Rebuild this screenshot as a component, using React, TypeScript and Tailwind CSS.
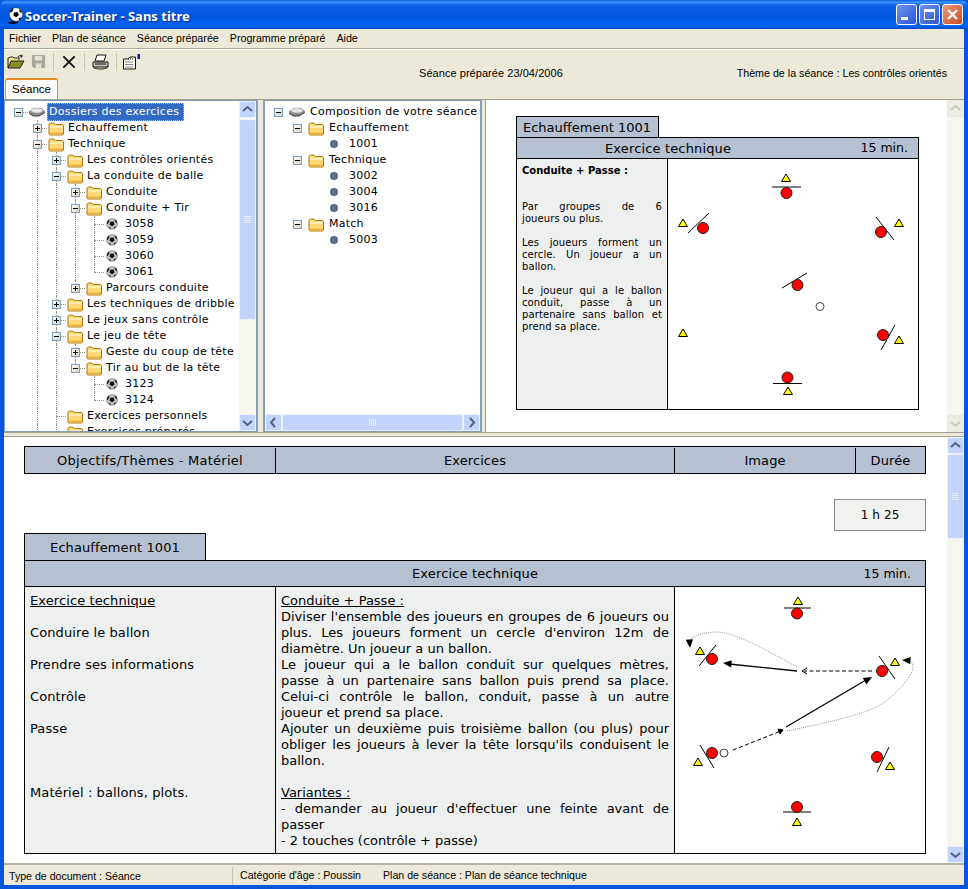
import React from "react";

const tahoma = "font-['Liberation_Sans',sans-serif]";
const verdana = "font-['DejaVu_Sans',sans-serif]";

type Exp = "plus" | "minus" | "none";
type Icon = "disk" | "folder" | "ball" | "dot";

interface TreeRow {
  label: string;
  guides: number[]; // columns holding a vertical dotted line
  level: number;
  exp: Exp;
  icon: Icon;
  last?: boolean;
  selected?: boolean;
}

const leftTree: TreeRow[] = [
  { label: "Dossiers des exercices", guides: [], level: 0, exp: "minus", icon: "disk", selected: true },
  { label: "Echauffement", guides: [], level: 1, exp: "plus", icon: "folder" },
  { label: "Technique", guides: [], level: 1, exp: "minus", icon: "folder" },
  { label: "Les contrôles orientés", guides: [1], level: 2, exp: "plus", icon: "folder" },
  { label: "La conduite de balle", guides: [1], level: 2, exp: "minus", icon: "folder" },
  { label: "Conduite", guides: [1, 2], level: 3, exp: "plus", icon: "folder" },
  { label: "Conduite + Tir", guides: [1, 2], level: 3, exp: "minus", icon: "folder" },
  { label: "3058", guides: [1, 2, 3], level: 4, exp: "none", icon: "ball" },
  { label: "3059", guides: [1, 2, 3], level: 4, exp: "none", icon: "ball" },
  { label: "3060", guides: [1, 2, 3], level: 4, exp: "none", icon: "ball" },
  { label: "3061", guides: [1, 2, 3], level: 4, exp: "none", icon: "ball", last: true },
  { label: "Parcours conduite", guides: [1, 2], level: 3, exp: "plus", icon: "folder", last: true },
  { label: "Les techniques de dribble", guides: [1], level: 2, exp: "plus", icon: "folder" },
  { label: "Le jeux sans contrôle", guides: [1], level: 2, exp: "plus", icon: "folder" },
  { label: "Le jeu de tête", guides: [1], level: 2, exp: "minus", icon: "folder" },
  { label: "Geste du coup de tête", guides: [1, 2], level: 3, exp: "plus", icon: "folder" },
  { label: "Tir au but de la tête", guides: [1, 2], level: 3, exp: "minus", icon: "folder", last: true },
  { label: "3123", guides: [1, 2], level: 4, exp: "none", icon: "ball" },
  { label: "3124", guides: [1, 2], level: 4, exp: "none", icon: "ball", last: true },
  { label: "Exercices personnels", guides: [1], level: 2, exp: "none", icon: "folder" },
  { label: "Exercices préparés", guides: [1], level: 2, exp: "none", icon: "folder" },
];

const rightTree = [
  { label: "Composition de votre séance", level: 0, icon: "disk" as Icon, exp: true },
  { label: "Echauffement", level: 1, icon: "folder" as Icon, exp: true },
  { label: "1001", level: 2, icon: "dot" as Icon, exp: false },
  { label: "Technique", level: 1, icon: "folder" as Icon, exp: true },
  { label: "3002", level: 2, icon: "dot" as Icon, exp: false },
  { label: "3004", level: 2, icon: "dot" as Icon, exp: false },
  { label: "3016", level: 2, icon: "dot" as Icon, exp: false },
  { label: "Match", level: 1, icon: "folder" as Icon, exp: true },
  { label: "5003", level: 2, icon: "dot" as Icon, exp: false },
];

function Expander({ open }: { open: boolean }) {
  return (
    <span className="flex h-[9px] w-[9px] items-center justify-center border border-[#7b9ebd] bg-gradient-to-br from-white to-[#d5d2c4]">
      <svg width="7" height="7" viewBox="0 0 7 7">
        <path d={open ? "M1 3.5H6" : "M1 3.5H6M3.5 1V6"} stroke="#000" strokeWidth="1" />
      </svg>
    </span>
  );
}

function FolderIcon() {
  return (
    <svg width="17" height="15" viewBox="0 0 17 15" className="shrink-0">
      <path d="M1 3.5C1 2.5 1.6 2 2.5 2H6L7.5 3.5H14C15 3.5 15.5 4 15.5 5V13C15.5 13.6 15 14 14.4 14H2.2C1.5 14 1 13.6 1 13Z" fill="#ffd878" stroke="#a87a14" />
      <path d="M2 6H15" stroke="#fff3c4" strokeWidth="1.5" />
      <path d="M2 12.5H15" stroke="#eeb43e" strokeWidth="2" />
    </svg>
  );
}

function DiskIcon() {
  return (
    <svg width="18" height="12" viewBox="0 0 18 12" className="shrink-0">
      <path d="M1 5.5L6 2H13L17 5V7L11 10.5H5L1 8Z" fill="#8c8c8c" />
      <ellipse cx="9" cy="4.5" rx="6" ry="2.6" fill="#e6e6e6" stroke="#9a9a9a" strokeWidth="0.5" />
      <path d="M1.5 7.5L6 9.8H11L16.5 6.5" stroke="#4e4e4e" fill="none" />
    </svg>
  );
}

function BallIcon() {
  return (
    <svg width="12" height="12" viewBox="0 0 12 12" className="shrink-0">
      <circle cx="6" cy="6" r="5.4" fill="#c8c8c8" stroke="#666" strokeWidth="0.6" />
      <path d="M4.2 3.8L7.6 3.6L8.6 6.4L6 8.4L3.4 6.6Z" fill="#111" />
      <path d="M0.8 4L3 1.2L3.4 3.6L1.4 6.4ZM8.6 1L11 3.6L10.6 5.6L8.8 3.6ZM2 8.6L4.6 9.6L4.6 11.4ZM7.4 9.6L10 8L8.6 10.8Z" fill="#222" />
    </svg>
  );
}

function SoccerLogo() {
  return (
    <svg width="17" height="18" viewBox="0 0 17 18" className="shrink-0">
      <path d="M0 15.5C3 14 8 14 12 15.5C9 17 3 17.5 0 15.5Z" fill="#000" />
      <circle cx="9" cy="7.5" r="6.8" fill="#fff" stroke="#222" strokeWidth="0.6" />
      <path d="M7 5.5L10.5 5L12 8L9.2 10.2L6.3 8.6Z" fill="#000" />
      <path d="M3 3.5L6 1.2L6.2 3.2L3.4 6ZM12 1.8L15.4 5.2L13 5.4ZM3 10.6L5.6 13.4L2.8 12ZM11.4 11.6L14.8 10L12.6 13.4Z" fill="#000" />
    </svg>
  );
}

function NodeIcon({ icon }: { icon: Icon }) {
  if (icon === "disk") return <DiskIcon />;
  if (icon === "folder") return <FolderIcon />;
  if (icon === "ball") return <BallIcon />;
  return <span className="h-[8px] w-[8px] shrink-0 rounded-full bg-[#5a6b8c]" />;
}

function GuideCell({ row, col }: { row: TreeRow; col: number }) {
  const elbow = col === row.level;
  const full = elbow ? row.level > 0 && !row.last : row.guides.includes(col);
  const half = elbow && row.level > 0 && row.last;
  return (
    <span className="relative flex h-4 w-[19px] shrink-0 items-center justify-center">
      {full && <span className="absolute left-[9px] top-0 h-4 border-l border-dotted border-[#8f8f8f]" />}
      {half && <span className="absolute left-[9px] top-0 h-2 border-l border-dotted border-[#8f8f8f]" />}
      {elbow && <span className="absolute left-[9px] top-2 w-[10px] border-t border-dotted border-[#8f8f8f]" />}
      {elbow && row.exp !== "none" && (
        <span className="relative">
          <Expander open={row.exp === "minus"} />
        </span>
      )}
    </span>
  );
}

function LeftTreeRow({ row }: { row: TreeRow }) {
  const cols = [0, 1, 2, 3, 4].slice(0, row.level + 1);
  const isBall = row.icon === "ball";
  return (
    <div className="flex h-4 items-center whitespace-nowrap">
      {cols.map((c) => (
        <GuideCell key={c} row={row} col={c} />
      ))}
      <span className={`flex shrink-0 justify-center ${isBall ? "w-[16px]" : "w-[18px]"}`}>
        <NodeIcon icon={row.icon} />
      </span>
      <span className={`${isBall ? "ml-[3px]" : "ml-[1px]"} ${row.selected ? "border border-dotted border-[#e0c060] bg-[#316ac5] pl-[1px] pr-[4px] text-white" : "px-[2px]"}`}>
        {row.label}
      </span>
    </div>
  );
}

function ScrollBtn({ dir, disabled }: { dir: "up" | "down" | "left" | "right"; disabled?: boolean }) {
  const d = {
    up: "M3 9L7.5 5L12 9",
    down: "M3 6L7.5 10L12 6",
    left: "M9 3L5 7.5L9 12",
    right: "M6 3L10 7.5L6 12",
  }[dir];
  return (
    <div
      className={`flex h-[17px] w-[17px] shrink-0 items-center justify-center rounded-[2px] border ${
        disabled ? "border-[#e8e8df] bg-[#eeede5]" : "border-[#eef2fd] bg-[#c3d4fc]"
      }`}
    >
      <svg width="15" height="15" viewBox="0 0 15 15">
        <path d={d} fill="none" stroke={disabled ? "#c8c8bc" : "#4d6185"} strokeWidth="2" />
      </svg>
    </div>
  );
}

function VScroll({ thumbTop, thumbH, disabled }: { thumbTop: number; thumbH: number; disabled?: boolean }) {
  return (
    <div className="flex h-full w-[17px] shrink-0 flex-col bg-[#f6f6ef]">
      <ScrollBtn dir="up" disabled={disabled} />
      <div className="flex min-h-0 flex-1 flex-col">
        <div className="shrink-0" style={{ height: thumbTop }} />
        {!disabled && (
          <div className="flex shrink-0 items-center justify-center rounded-[2px] border border-[#eef2fd] bg-[#c3d4fc]" style={{ height: thumbH }}>
            <svg width="7" height="7" viewBox="0 0 7 7">
              <path d="M0 0.5H7M0 2.5H7M0 4.5H7M0 6.5H7" stroke="#e8eefc" />
            </svg>
          </div>
        )}
      </div>
      <ScrollBtn dir="down" disabled={disabled} />
    </div>
  );
}

function Tri({ x, y }: { x: number; y: number }) {
  return <path d={`M${x} ${y}L${x + 4.5} ${y + 7.5}H${x - 4.5}Z`} fill="#ffff00" stroke="#000" strokeWidth="1" />;
}

function Player({ cx, cy, line }: { cx: number; cy: number; line: [number, number, number, number] }) {
  return (
    <g>
      <line x1={line[0]} y1={line[1]} x2={line[2]} y2={line[3]} stroke="#000" strokeWidth="1" />
      <circle cx={cx} cy={cy} r="5.5" fill="#ff0000" stroke="#222" strokeWidth="1" />
    </g>
  );
}

function Ball({ cx, cy }: { cx: number; cy: number }) {
  return <circle cx={cx} cy={cy} r="4" fill="#fff" stroke="#444" strokeWidth="1" />;
}

function Head({ x, y, angle }: { x: number; y: number; angle: number }) {
  return <path d="M0 0L-8.5 -3.7L-8.5 3.7Z" fill="#000" transform={`translate(${x} ${y}) rotate(${angle})`} />;
}

function SmallDiagram() {
  return (
    <svg viewBox="668 159 250 250" className="block h-[250px] w-[250px]">
      <Tri x={786} y={174} />
      <Player cx={786.5} cy={193} line={[772, 187, 801, 187]} />
      <Player cx={881} cy={232} line={[876, 217, 894, 240]} />
      <Tri x={899} y={219} />
      <Tri x={683} y={219} />
      <Player cx={703} cy={228} line={[688, 233, 709, 213]} />
      <Player cx={797.5} cy={285} line={[782, 288, 807, 273]} />
      <Ball cx={820} cy={306.5} />
      <Player cx={883} cy={335} line={[881, 350, 895, 325]} />
      <Tri x={899} y={336} />
      <Tri x={683} y={329} />
      <Player cx={787.5} cy={377.5} line={[773, 383.5, 802, 383.5]} />
      <Tri x={788} y={387} />
    </svg>
  );
}

function BigDiagram() {
  return (
    <svg viewBox="675 587 250 266" className="block h-[266px] w-[250px]">
      <Tri x={798} y={597} />
      <Player cx={797} cy={613.5} line={[784, 608, 811, 608]} />
      <Tri x={700} y={647} />
      <Player cx={712} cy={659} line={[699, 666, 716, 645]} />
      <Player cx={882} cy={671} line={[879, 656, 895, 679]} />
      <Tri x={895} y={658} />
      <Player cx={712} cy={753} line={[700, 745, 714, 768]} />
      <Tri x={698} y={758} />
      <Ball cx={724} cy={753} />
      <Player cx={877} cy={757} line={[889, 747, 877, 772]} />
      <Tri x={890} y={762} />
      <Player cx={797} cy={807} line={[783, 812, 811, 812]} />
      <Tri x={797} y={818} />
      <line x1={797} y1={671} x2={729} y2={664} stroke="#000" strokeWidth="1.3" />
      <Head x={723} y={663} angle={186} />
      <line x1={872} y1={671} x2={804} y2={671} stroke="#000" strokeWidth="1" strokeDasharray="4 2.5" />
      <path d="M807 668L802 671L807 674" fill="none" stroke="#000" />
      <line x1={786} y1={727} x2={866} y2={680} stroke="#000" strokeWidth="1.3" />
      <Head x={872} y={677} angle={-30} />
      <line x1={733} y1={750} x2={781} y2={731} stroke="#000" strokeWidth="1" strokeDasharray="4 2.5" />
      <path d="M778 729L783 730L780 734Z" fill="#000" stroke="#000" />
      <path d="M797 667C770 652 735 632 717 632C705 632 695 635 689 640" fill="none" stroke="#999" strokeWidth="1" strokeDasharray="1 1" />
      <Head x={690} y={648} angle={86} />
      <path d="M787 731C830 722 868 714 885 702C900 690 913 675 913 667C913 663 911 661 909 660" fill="none" stroke="#999" strokeWidth="1" strokeDasharray="1 1" />
      <Head x={902} y={660} angle={184} />
    </svg>
  );
}

function ToolbarIcons() {
  return (
    <div className="flex h-[24px] items-center pl-[3px]">
      <svg width="18" height="16" viewBox="0 0 18 16">
        <path d="M1 14V4H2L3 3H6L7 4H12V6" fill="#f5e58a" stroke="#222" />
        <path d="M1 14L4 7H17L13 14Z" fill="#8d8a2a" stroke="#222" />
        <path d="M11 3C12 1 14 1 15 2.5M15 0.5V3H12.6" fill="none" stroke="#222" />
      </svg>
      <svg width="15" height="15" viewBox="0 0 16 16" className="ml-[6px]">
        <path d="M1 1H15V15H3L1 13Z" fill="#a7a69c" />
        <rect x="4" y="2" width="8" height="5" fill="#e2e1d6" />
        <rect x="5" y="10" width="6" height="5" fill="#e2e1d6" />
      </svg>
      <span className="ml-[7px] h-[18px] border-l border-[#c9c6b4]" />
      <svg width="14" height="14" viewBox="0 0 15 15" className="ml-[8px]">
        <path d="M1.5 1.5L13.5 13.5M13.5 1.5L1.5 13.5" stroke="#111" strokeWidth="2" />
      </svg>
      <span className="ml-[8px] h-[18px] border-l border-[#c9c6b4]" />
      <svg width="17" height="16" viewBox="0 0 17 16" className="ml-[7px]">
        <path d="M5 1H14L12 7H3Z" fill="#fff" stroke="#111" />
        <path d="M1 8H16V13H1Z" fill="#c7c5b8" stroke="#111" />
        <path d="M1.5 13.5C4 15.5 13 15.5 15.5 13.5" fill="none" stroke="#111" />
        <path d="M3 10H14" stroke="#111" />
      </svg>
      <span className="ml-[7px] h-[18px] border-l border-[#c9c6b4]" />
      <svg width="17" height="16" viewBox="0 0 17 16" className="ml-[6px]">
        <path d="M0.5 5H5L7 3H12.5V15H0.5Z" fill="#fff" stroke="#111" />
        <path d="M2.5 8H10.5M2.5 10.5H10.5M2.5 13H10.5" stroke="#111" strokeDasharray="1 1" />
        <path d="M5 5H10" stroke="#111" strokeDasharray="1 1" />
        <rect x="14.5" y="0" width="2.5" height="5" fill="#1a1a9a" />
      </svg>
    </div>
  );
}

function Line({ text, just, u }: { text: string; just?: boolean; u?: boolean }) {
  return (
    <div className={`h-4 whitespace-nowrap ${just ? "[text-align-last:justify]" : ""} ${u ? "underline" : ""}`}>
      {text || "\u00a0"}
    </div>
  );
}

function Small({ text, just }: { text: string; just?: boolean }) {
  return <div className={`h-[12px] whitespace-nowrap ${just ? "[text-align-last:justify]" : ""}`}>{text || "\u00a0"}</div>;
}

const leftLines = [
  "Exercice technique",
  "",
  "Conduire le ballon",
  "",
  "Prendre ses informations",
  "",
  "Contrôle",
  "",
  "Passe",
  "",
  "",
  "",
  "Matériel : ballons, plots.",
];

const midLines: { t: string; j?: boolean; u?: boolean }[] = [
  { t: "Conduite + Passe :", u: true },
  { t: "Diviser l'ensemble des joueurs en groupes de 6 joueurs ou", j: true },
  { t: "plus. Les joueurs forment un cercle d'environ 12m de", j: true },
  { t: "diamètre. Un joueur a un ballon." },
  { t: "Le joueur qui a le ballon conduit sur quelques mètres,", j: true },
  { t: "passe à un partenaire sans ballon puis prend sa place.", j: true },
  { t: "Celui-ci contrôle le ballon, conduit, passe à un autre", j: true },
  { t: "joueur et prend sa place." },
  { t: "Ajouter un deuxième puis troisième ballon (ou plus) pour", j: true },
  { t: "obliger les joueurs à lever la tête lorsqu'ils conduisent le", j: true },
  { t: "ballon." },
  { t: "" },
  { t: "Variantes :", u: true },
  { t: "- demander au joueur d'effectuer une feinte avant de", j: true },
  { t: "passer" },
  { t: "- 2 touches (contrôle + passe)" },
];

export default function App() {
  return (
    <div className={`flex h-[889px] w-[968px] flex-col overflow-hidden bg-[#0855dd] text-black ${verdana}`}>
      {/* title bar */}
      <div className="flex h-[29px] shrink-0 items-center rounded-t-[7px] bg-[linear-gradient(180deg,#0a5ce0_0%,#3d95ff_8%,#0a5fe6_18%,#0055e0_60%,#0064f5_88%,#0049c8_100%)] pl-[7px] pr-[5px] pt-[3px]">
        <SoccerLogo />
        <span className="ml-[1px] mt-[2px] font-['Noto_Sans',sans-serif] text-[13px] font-bold text-white [text-shadow:1px_1px_#0a2a90]">Soccer-Trainer - Sans titre</span>
        <div className="ml-auto flex gap-[2px] pb-[3px]">
          <div className="flex h-[21px] w-[21px] items-end rounded-[3px] border border-white bg-[linear-gradient(135deg,#6d93ec,#2a56d8)] pb-[4px] pl-[4px]">
            <span className="h-[3px] w-[7px] bg-white" />
          </div>
          <div className="flex h-[21px] w-[21px] items-center justify-center rounded-[3px] border border-white bg-[linear-gradient(135deg,#6d93ec,#2a56d8)]">
            <span className="h-[11px] w-[11px] border border-t-[3px] border-white" />
          </div>
          <div className="flex h-[21px] w-[21px] items-center justify-center rounded-[3px] border border-white bg-[linear-gradient(135deg,#ea9a7a,#c94a20)]">
            <svg width="13" height="13" viewBox="0 0 13 13">
              <path d="M2 2L11 11M11 2L2 11" stroke="#fff" strokeWidth="2.4" />
            </svg>
          </div>
        </div>
      </div>

      {/* window body */}
      <div className="mx-[4px] flex min-h-0 flex-1 flex-col bg-[#ece9d8]">
        {/* menu */}
        <div className={`flex h-[20px] shrink-0 items-center gap-[11px] border-b border-[#a9a899] pl-[5px] text-[10.7px] ${tahoma}`}>
          <span>Fichier</span>
          <span>Plan de séance</span>
          <span>Séance préparée</span>
          <span>Programme préparé</span>
          <span>Aide</span>
        </div>
        <div className="h-px shrink-0 bg-white" />

        {/* toolbar + tab */}
        <div className="flex h-[50px] shrink-0 border-b border-[#a2a090]">
          <div className="flex w-[300px] flex-col">
            <ToolbarIcons />
            <div className={`mt-[5px] ml-[1px] flex h-[21px] w-[53px] items-center justify-center rounded-t-[3px] border border-b-0 border-[#a2a090] border-t-2 border-t-[#e68b2c] bg-[#fcfcfa] text-[11.5px] ${tahoma}`}>
              Séance
            </div>
          </div>
          <div className={`flex flex-1 pt-[16px] text-[11px] leading-[14px] ${tahoma}`}>
            <span className="ml-[115px] tracking-[0.05px]">Séance préparée 23/04/2006</span>
            <span className="ml-auto mr-[17px] text-[10.7px]">Thème de la séance : Les contrôles orientés</span>
          </div>
        </div>

        {/* top split */}
        <div className="flex h-[332px] shrink-0 text-[11px] tracking-[0.25px]">
          <div className="flex h-full w-[253px] shrink-0 border border-[#7f9db9] bg-white">
            <div className="min-w-0 flex-1 overflow-hidden pl-[4px] pt-[3px] leading-4">
              {leftTree.map((r) => (
                <LeftTreeRow key={r.label} row={r} />
              ))}
            </div>
            <VScroll thumbTop={1} thumbH={201} />
          </div>
          <div className="w-[7px] shrink-0 border-x border-[#a2a090]" />
          <div className="flex h-full w-[217px] shrink-0 flex-col border border-[#7f9db9] bg-white">
            <div className="min-h-0 flex-1 overflow-hidden pl-[4px] pt-[3px] leading-4">
              {rightTree.map((r) => (
                <div key={r.label} className="flex h-4 items-center whitespace-nowrap" style={{ paddingLeft: r.level * 19 }}>
                  <span className="flex h-4 w-[19px] shrink-0 items-center justify-center">
                    {r.exp && <Expander open />}
                  </span>
                  <span className={`flex w-[18px] shrink-0 justify-center ${r.icon === "dot" ? "pr-[2px]" : ""}`}>
                    <NodeIcon icon={r.icon} />
                  </span>
                  <span className={r.icon === "dot" ? "ml-[5px]" : "ml-[4px]"}>{r.label}</span>
                </div>
              ))}
            </div>
            <div className="flex h-[17px] shrink-0 bg-[#f6f6ef]">
              <ScrollBtn dir="left" />
              <div className="flex flex-1 items-center justify-center rounded-[2px] border border-[#eef2fd] bg-[#c3d4fc]">
                <svg width="7" height="7" viewBox="0 0 7 7">
                  <path d="M0.5 0V7M2.5 0V7M4.5 0V7M6.5 0V7" stroke="#e8eefc" />
                </svg>
              </div>
              <ScrollBtn dir="right" />
            </div>
          </div>
          <div className="w-[5px] shrink-0 border-x border-[#a2a090]" />
          <div className="flex min-w-0 flex-1 bg-white tracking-normal">
            <div className="flex-1 pl-[30px] pt-[16px]">
              <div className="w-[403px]">
                <div className="flex h-[21px] w-[143px] items-center border border-b-0 border-black bg-[#b5c0d0] pl-[6px] pt-[1px] text-[13px]">
                  Echauffement 1001
                </div>
                <div className="flex h-[22px] items-center border border-black bg-[#b5c0d0] pl-[88px] pr-[10px] pt-[1px] text-[13px] tracking-[0.15px]">
                  <span>Exercice technique</span>
                  <span className="ml-auto text-[12.5px] tracking-normal">15 min.</span>
                </div>
                <div className="flex h-[251px] border border-t-0 border-black">
                  <div className="w-[151px] shrink-0 border-r border-black bg-[#eef0f0] px-[5px] pt-[6px] text-[10px] leading-[12px] tracking-[0.1px]">
                    <div className="mb-[24px] font-bold tracking-normal">Conduite + Passe :</div>
                    <Small text="Par groupes de 6" just />
                    <Small text="joueurs ou plus." />
                    <Small text="" />
                    <Small text="Les joueurs forment un" just />
                    <Small text="cercle. Un joueur a un" just />
                    <Small text="ballon." />
                    <Small text="" />
                    <Small text="Le joueur qui a le ballon" just />
                    <Small text="conduit, passe à un" just />
                    <Small text="partenaire sans ballon et" just />
                    <Small text="prend sa place." />
                  </div>
                  <SmallDiagram />
                </div>
              </div>
            </div>
            <VScroll thumbTop={0} thumbH={0} disabled />
          </div>
        </div>

        {/* splitter */}
        <div className="h-[5px] shrink-0 border-y border-[#a2a090] bg-[#ece9d8]" />

        {/* lower pane */}
        <div className="flex min-h-0 flex-1 bg-white text-[13px] tracking-[0.1px]">
          <div className="min-w-0 flex-1 overflow-hidden pl-[20px] pt-[9px]">
            <div className="w-[902px]">
              <div className="flex h-[28px] items-center border border-black bg-[#b5c0d0] pt-[1px] text-center">
                <span className="w-[251px] border-r border-black leading-[25px] tracking-[0.25px]">Objectifs/Thèmes - Matériel</span>
                <span className="w-[399px] border-r border-black leading-[25px]">Exercices</span>
                <span className="w-[181px] border-r border-black leading-[25px]">Image</span>
                <span className="flex-1 leading-[25px]">Durée</span>
              </div>
              <div className="mt-[25px] flex justify-end">
                <div className="flex h-[32px] w-[92px] items-center justify-center border border-[#8c8c8c] bg-[#f1f1ef] text-[12px]">1 h 25</div>
              </div>
              <div className="mt-[2px] flex h-[27px] w-[182px] items-center justify-center border border-b-0 border-black bg-[#b5c0d0] pt-[2px]">
                Echauffement 1001
              </div>
              <div className="flex h-[27px] items-center border border-black bg-[#b5c0d0] pl-[387px] pr-[14px] pt-[1px]">
                <span className="tracking-[0.15px]">Exercice technique</span>
                <span className="ml-auto text-[12.5px] tracking-normal">15 min.</span>
              </div>
              <div className="flex h-[267px] border border-t-0 border-black">
                <div className="w-[251px] shrink-0 border-r border-black bg-[#eef0f0] pl-[5px] pt-[6px] leading-4">
                  {leftLines.map((t, i) => (
                    <Line key={i} text={t} u={i === 0} />
                  ))}
                </div>
                <div className="w-[399px] shrink-0 overflow-hidden border-r border-black bg-[#eef0f0] px-[5px] pt-[6px] leading-4 tracking-normal">
                  {midLines.map((l, i) => (
                    <Line key={i} text={l.t} just={l.j} u={l.u} />
                  ))}
                </div>
                <BigDiagram />
              </div>
            </div>
          </div>
          <VScroll thumbTop={0} thumbH={85} />
        </div>

        {/* status bar */}
        <div className={`flex h-[22px] shrink-0 items-center border-t-2 border-[#b5b2a3] pt-[1px] text-[10.6px] ${tahoma}`}>
          <span className="w-[229px] border-r border-[#c9c6b4] pl-[5px] leading-[18px]">Type de document : Séance</span>
          <span className="ml-[7px]">Catégorie d'âge : Poussin</span>
          <span className="ml-[22px]">Plan de séance : Plan de séance technique</span>
        </div>
      </div>
      <div className="h-[4px] shrink-0" />
    </div>
  );
}
